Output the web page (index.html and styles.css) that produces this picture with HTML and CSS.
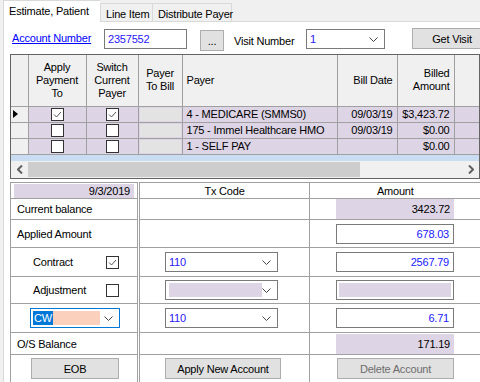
FILE: index.html
```html
<!DOCTYPE html>
<html lang="en">
    <head>
        <meta charset="UTF-8" />
        <meta name="viewport" content="width=device-width, initial-scale=1.0" />
        <title>Estimate, Patient</title>
        <link rel="stylesheet" href="styles.css">
    </head>
    <body>
        <div class="tabs">
            <div class="tab active">Estimate, Patient</div>
            <div class="tab">Line Item</div>
            <div class="tab">Distribute Payer</div>
        </div>

        <div class="panel">
            <div class="toolbar">
                <a class="link" href="#">Account Number</a>
                <div class="textbox acct">2357552</div>
                <button class="btn dots">...</button>
                <span class="visit-label">Visit Number</span>
                <div class="combo visit">
                    <span class="combo-text">1</span>
                    <svg class="chev" width="9" height="5"><polyline points="0.5,0.5 4.5,4.5 8.5,0.5" fill="none" stroke="#444" /></svg>
                </div>
                <button class="btn get-visit">Get Visit</button>
            </div>

            <div class="grid">
                <table class="payers">
                    <colgroup>
                        <col style="width: 17px" />
                        <col style="width: 58px" />
                        <col style="width: 52px" />
                        <col style="width: 44px" />
                        <col style="width: 155px" />
                        <col style="width: 60px" />
                        <col style="width: 57px" />
                        <col style="width: 67px" />
                    </colgroup>
                    <tr>
                        <th class="rowhead"></th>
                        <th>Apply<br />Payment<br />To</th>
                        <th>Switch<br />Current<br />Payer</th>
                        <th>Payer<br />To Bill</th>
                        <th class="left">Payer</th>
                        <th class="right">Bill Date</th>
                        <th class="right">Billed<br />Amount</th>
                        <th class="right">Applied<br />Amount</th>
                    </tr>
                    <tr>
                        <td class="rowhead"><span class="current"></span></td>
                        <td class="center"><svg class="chk" width="13" height="13"><rect x="0.5" y="0.5" width="12" height="12" fill="#fff" stroke="#333" /><polyline points="3,6.5 5.5,9 10,4" fill="none" stroke="#555" /></svg></td>
                        <td class="center"><svg class="chk" width="13" height="13"><rect x="0.5" y="0.5" width="12" height="12" fill="#fff" stroke="#333" /><polyline points="3,6.5 5.5,9 10,4" fill="none" stroke="#555" /></svg></td>
                        <td class="tobill"><span></span></td>
                        <td>4 - MEDICARE (SMMS0)</td>
                        <td class="right">09/03/19</td>
                        <td class="right">$3,423.72</td>
                        <td></td>
                    </tr>
                    <tr>
                        <td class="rowhead"></td>
                        <td class="center"><svg class="chk" width="13" height="13"><rect x="0.5" y="0.5" width="12" height="12" fill="#fff" stroke="#333" /></svg></td>
                        <td class="center"><svg class="chk" width="13" height="13"><rect x="0.5" y="0.5" width="12" height="12" fill="#fff" stroke="#333" /></svg></td>
                        <td class="tobill"><span></span></td>
                        <td>175 - Immel Healthcare HMO</td>
                        <td class="right">09/03/19</td>
                        <td class="right">$0.00</td>
                        <td></td>
                    </tr>
                    <tr>
                        <td class="rowhead"></td>
                        <td class="center"><svg class="chk" width="13" height="13"><rect x="0.5" y="0.5" width="12" height="12" fill="#fff" stroke="#333" /></svg></td>
                        <td class="center"><svg class="chk" width="13" height="13"><rect x="0.5" y="0.5" width="12" height="12" fill="#fff" stroke="#333" /></svg></td>
                        <td class="tobill"><span></span></td>
                        <td>1 - SELF PAY</td>
                        <td></td>
                        <td class="right">$0.00</td>
                        <td></td>
                    </tr>
                </table>
                <div class="grid-fill"></div>
                <div class="hscroll">
                    <span class="arrow"><svg width="6" height="9"><polyline points="5,0.5 1,4.5 5,8.5" fill="none" stroke="#606060" stroke-width="2" /></svg></span>
                    <span class="thumb"></span>
                    <span class="track"></span>
                    <span class="arrow"><svg width="6" height="9"><polyline points="1,0.5 5,4.5 1,8.5" fill="none" stroke="#606060" stroke-width="2" /></svg></span>
                </div>
            </div>

            <table class="entry">
                <colgroup>
                    <col style="width: 128px" />
                    <col style="width: 171px" />
                    <col style="width: 171px" />
                </colgroup>
                <tr class="head">
                    <td><div class="date-box">9/3/2019</div></td>
                    <td class="tx center">Tx Code</td>
                    <td class="center">Amount</td>
                </tr>
                <tr class="r-balance">
                    <td class="label">Current balance</td>
                    <td class="tx"></td>
                    <td><div class="amount readonly">3423.72</div></td>
                </tr>
                <tr class="r-applied">
                    <td class="label">Applied Amount</td>
                    <td class="tx"></td>
                    <td><div class="amount">678.03</div></td>
                </tr>
                <tr class="r-contract">
                    <td>
                        <div class="check-row">
                            <span class="check-label">Contract</span>
                            <svg class="chk" width="13" height="13"><rect x="0.5" y="0.5" width="12" height="12" fill="#fff" stroke="#333" /><polyline points="3,6.5 5.5,9 10,4" fill="none" stroke="#555" /></svg>
                        </div>
                    </td>
                    <td class="tx">
                        <div class="combo code">
                            <span class="combo-text">110</span>
                            <svg class="chev" width="9" height="5"><polyline points="0.5,0.5 4.5,4.5 8.5,0.5" fill="none" stroke="#444" /></svg>
                        </div>
                    </td>
                    <td><div class="amount">2567.79</div></td>
                </tr>
                <tr class="r-adjust">
                    <td>
                        <div class="check-row">
                            <span class="check-label">Adjustment</span>
                            <svg class="chk" width="13" height="13"><rect x="0.5" y="0.5" width="12" height="12" fill="#fff" stroke="#333" /></svg>
                        </div>
                    </td>
                    <td class="tx">
                        <div class="combo code disabled">
                            <span class="combo-fill"></span>
                            <svg class="chev" width="9" height="5"><polyline points="0.5,0.5 4.5,4.5 8.5,0.5" fill="none" stroke="#444" /></svg>
                        </div>
                    </td>
                    <td><div class="amount disabled"><span class="amount-fill"></span></div></td>
                </tr>
                <tr class="r-cw">
                    <td>
                        <div class="combo cw">
                            <span class="cw-fill"><span class="sel">CW</span></span>
                            <svg class="chev" width="9" height="5"><polyline points="0.5,0.5 4.5,4.5 8.5,0.5" fill="none" stroke="#444" /></svg>
                        </div>
                    </td>
                    <td class="tx">
                        <div class="combo code">
                            <span class="combo-text">110</span>
                            <svg class="chev" width="9" height="5"><polyline points="0.5,0.5 4.5,4.5 8.5,0.5" fill="none" stroke="#444" /></svg>
                        </div>
                    </td>
                    <td><div class="amount">6.71</div></td>
                </tr>
                <tr class="r-os">
                    <td class="label">O/S Balance</td>
                    <td class="tx"></td>
                    <td><div class="amount readonly">171.19</div></td>
                </tr>
                <tr class="r-buttons">
                    <td><button class="btn eob">EOB</button></td>
                    <td class="tx"><button class="btn apply-new">Apply New Account</button></td>
                    <td><button class="btn delete" disabled>Delete Account</button></td>
                </tr>
            </table>
        </div>
    </body>
</html>
```

FILE: styles.css
```css
* {
    box-sizing: border-box;
}

body {
    margin: 0;
    width: 480px;
    height: 382px;
    overflow: hidden;
    background-color: #f0f0f0;
    font-family: "Liberation Sans", Arial, sans-serif;
    font-size: 11px;
    letter-spacing: -0.2px;
    color: #000;
}

/* tab strip */
.tabs {
    display: flex;
    align-items: flex-end;
    height: 21px;
    padding-left: 3px;
}

.tab {
    height: 18px;
    padding: 4px 0 0 5px;
    border: 1px solid #d9d9d9;
    border-bottom: none;
    background-color: #f0f0f0;
    white-space: nowrap;
}

.tab:nth-child(2) {
    width: 53px;
}

.tab:nth-child(3) {
    width: 79px;
    border-left: none;
}

.tab.active {
    width: 97px;
    height: 22px;
    padding: 4px 0 0 5px;
    margin-bottom: -1px;
    background-color: #fff;
    border-right: none;
    position: relative;
}

.panel {
    height: 361px;
    margin-left: 3px;
    padding-left: 6px;
    background-color: #fff;
    border-top: 1px solid #d9d9d9;
    border-left: 1px solid #d9d9d9;
}

/* account / visit bar */
.toolbar {
    display: flex;
    align-items: flex-start;
    padding-top: 6px;
    height: 32px;
}

.toolbar > * {
    flex-shrink: 0;
}

.link {
    margin: 4px 0 0 2px;
    width: 92px;
    color: #0000ff;
}

.textbox,
.combo {
    display: flex;
    align-items: center;
    height: 20px;
    border: 1px solid #7a7a7a;
    background-color: #fff;
    color: #2a16f5;
    padding-left: 3px;
}

.acct {
    width: 83px;
    margin-top: 1px;
}

.btn {
    height: 21px;
    padding: 0;
    border: 1px solid #adadad;
    background-color: #e1e1e1;
    font-family: inherit;
    font-size: 11px;
    letter-spacing: inherit;
    color: #000;
}

.dots {
    width: 24px;
    margin: 2px 0 0 13px;
}

.visit-label {
    width: 72px;
    margin: 7px 0 0 10px;
}

.combo {
    justify-content: space-between;
    padding-right: 6px;
}

.visit {
    width: 79px;
    margin-top: 1px;
}

.get-visit {
    width: 80px;
    height: 21px;
    margin-left: 27px;
}

/* payer grid */
.grid {
    display: flex;
    flex-direction: column;
    height: 125px;
    border: 1px solid #646464;
    overflow: hidden;
    background-color: #cadcf2;
}

.payers {
    border-collapse: collapse;
    table-layout: fixed;
    width: 510px;
}

.payers th {
    height: 51px;
    padding: 0 4px;
    border: 1px solid #a0a0a0;
    border-top: none;
    background-color: #f0f0f0;
    font-weight: normal;
    line-height: 13px;
    text-align: center;
    vertical-align: middle;
}

.payers td {
    height: 16px;
    padding: 0 4px;
    border: 1px solid #a0a0a0;
    background-color: #ddd5e6;
    line-height: 14px;
    white-space: nowrap;
    overflow: hidden;
}

.payers .rowhead {
    border-left: none;
    background-color: #f0f0f0;
    padding: 0;
}

.payers .left {
    text-align: left;
}

.payers .right {
    text-align: right;
}

.payers .center {
    text-align: center;
    padding: 0;
}

.chk {
    display: block;
}

.payers .chk {
    margin: 0 auto;
}

.current {
    display: block;
    width: 0;
    height: 0;
    margin-left: 2px;
    border-top: 4px solid transparent;
    border-bottom: 4px solid transparent;
    border-left: 5px solid #000;
}

.payers .tobill {
    padding: 1px;
}

.tobill span {
    display: block;
    height: 13px;
    background-color: #e3e3e3;
}

.grid-fill {
    flex: 1;
}

.hscroll {
    display: flex;
    height: 17px;
    background-color: #f0f0f0;
}

.arrow {
    display: flex;
    align-items: center;
    justify-content: center;
    width: 17px;
}

.thumb {
    width: 332px;
    margin: 1px 0;
    background-color: #cdcdcd;
}

.track {
    flex: 1;
}

/* amounts table */
.entry {
    margin-top: 3px;
    border-collapse: collapse;
    table-layout: fixed;
    width: 470px;
}

.entry td {
    padding: 0;
    border: 1px solid #a0a0a0;
    border-right: none;
    vertical-align: middle;
    white-space: nowrap;
}

.entry .tx {
    border-left: 3px double #a0a0a0;
}

.entry .center {
    text-align: center;
}

.entry .head td {
    height: 16px;
}

.date-box {
    height: 14px;
    margin: 1px 3px 0 3px;
    padding-right: 4px;
    background-color: #ddd5e6;
    text-align: right;
    line-height: 14px;
}

.entry .label {
    padding-left: 6px;
}

.r-balance td {
    height: 21px;
}

.r-applied td {
    height: 28px;
}

.r-contract td,
.r-cw td {
    height: 29px;
}

.r-adjust td {
    height: 27px;
}

.r-os td {
    height: 22px;
}

.r-buttons td {
    height: 28px;
}

.amount {
    width: 118px;
    height: 20px;
    margin-left: 26px;
    padding-right: 4px;
    border: 1px solid #7a7a7a;
    background-color: #fff;
    color: #2020ff;
    text-align: right;
    line-height: 18px;
}

.amount.readonly {
    border: none;
    background-color: #ddd5e6;
    color: #000;
    line-height: 20px;
}

.amount.disabled {
    padding: 2px;
}

.amount-fill {
    display: block;
    height: 14px;
    background-color: #ddd5e6;
}

.check-row {
    display: flex;
    align-items: center;
    padding-left: 22px;
}

.check-label {
    width: 73px;
}

.code {
    width: 113px;
    margin-left: 25px;
}

.combo-fill {
    width: 94px;
    height: 14px;
    background-color: #ddd5e6;
}

.cw {
    width: 90px;
    margin-left: 19px;
    border-color: #0078d7;
    padding-left: 2px;
}

.cw-fill {
    display: flex;
    width: 67px;
    height: 14px;
    background-color: #fbd0bc;
}

.sel {
    padding: 0 1px;
    background-color: #0078d7;
    color: #fff;
    line-height: 14px;
}

.eob {
    width: 88px;
    margin-left: 20px;
}

.apply-new {
    width: 116px;
    margin-left: 25px;
}

.delete {
    width: 117px;
    margin-left: 27px;
    color: #6d6d6d;
}
```
